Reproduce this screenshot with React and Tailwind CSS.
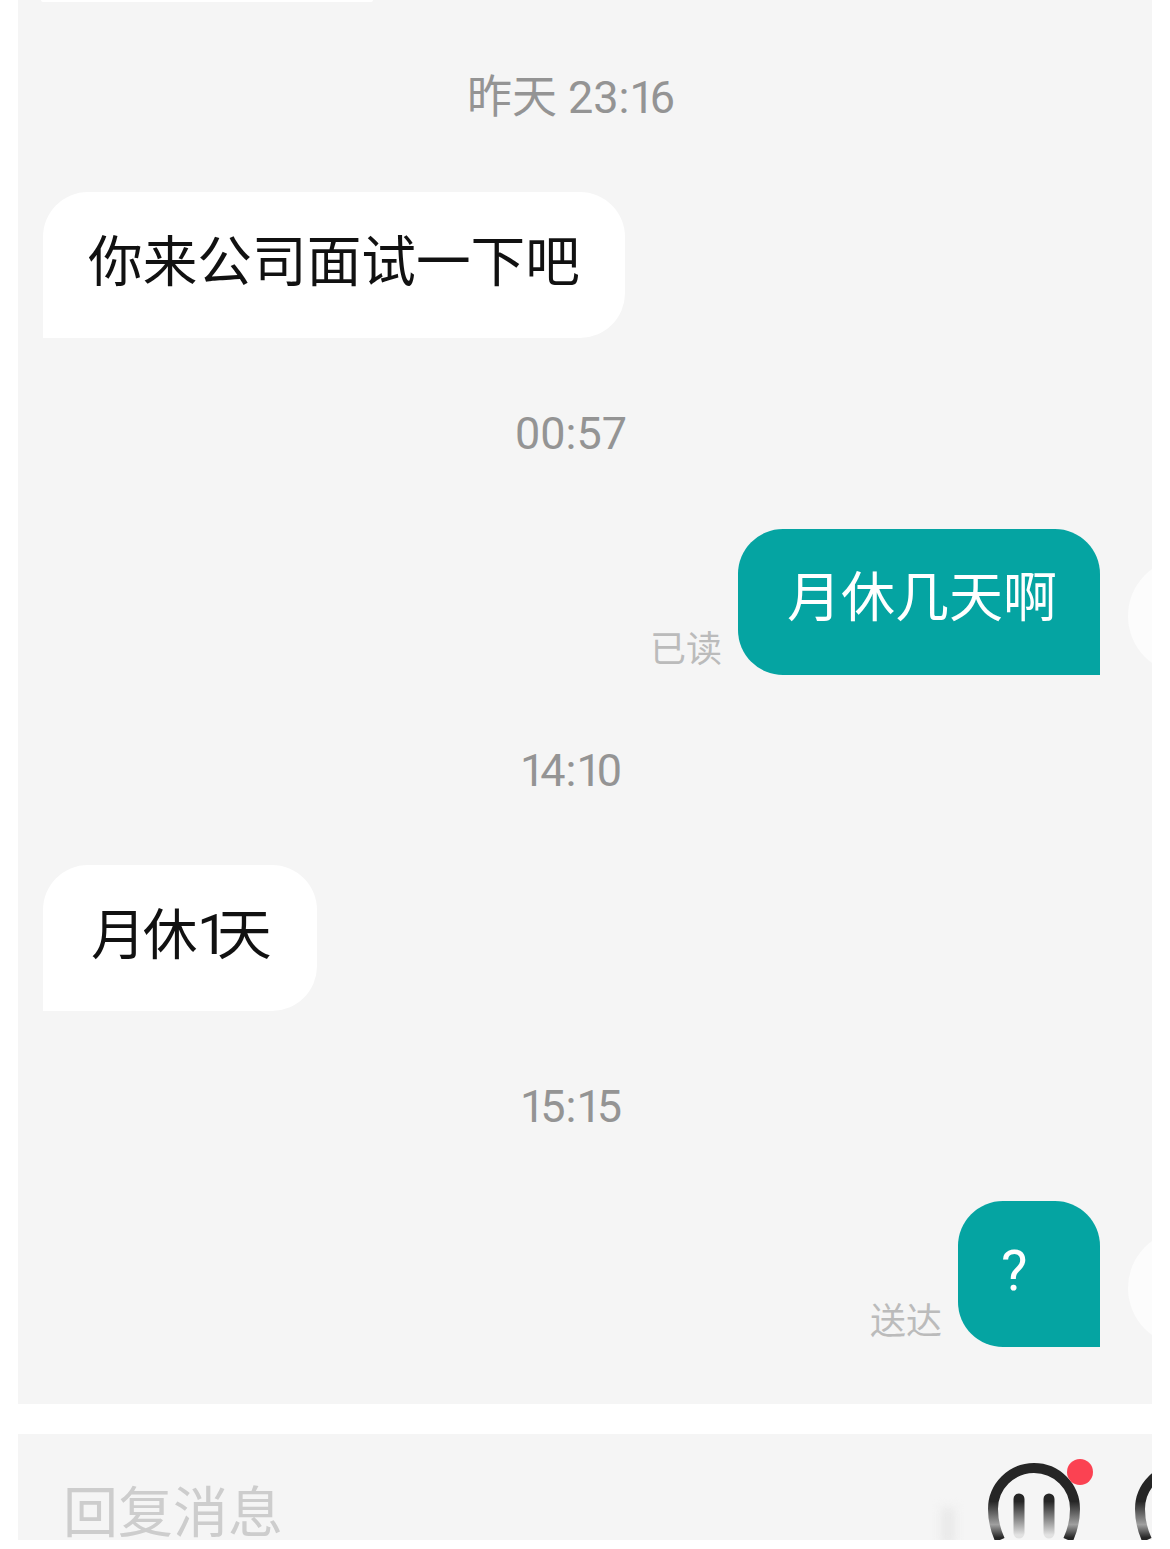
const fontStack = { fontFamily: 'Roboto, "Noto Sans CJK SC", sans-serif' };

function One() {
  return <span className="tracking-[-5px]">1</span>;
}

function Time({ children }) {
  return (
    <div className="h-[60px] pr-[28px] pt-[1px] flex items-center justify-center text-[45px] leading-[60px] text-[#949494]">
      <span>{children}</span>
    </div>
  );
}

function LeftBubble({ className, children }) {
  return (
    <div className="flex pl-[25px]">
      <div className={`h-[146px] pb-[6px] flex items-center pr-[45px] bg-white rounded-[45px] rounded-bl-none text-[54.67px] leading-none text-[#111111] ${className}`}>
        <span>{children}</span>
      </div>
    </div>
  );
}

function RightBubble({ status, className, children }) {
  return (
    <div className="flex justify-end items-end mr-[-92px]">
      <span className="mr-[16px] mb-[3px] text-[36px] leading-[44px] text-[#bbbbbb]">{status}</span>
      <div className={`h-[146px] min-w-[142px] pb-[6px] flex items-center bg-[#05a4a2] rounded-[45px] rounded-br-none text-[54px] leading-none text-white ${className}`}>
        {children}
      </div>
      {/* 头像，右边被裁掉 */}
      <div className="ml-[28px] mb-[1px] w-[116px] h-[116px] rounded-full bg-[#fcfcfc] shrink-0" />
    </div>
  );
}

function HeadIcon({ id, dot }) {
  return (
    <svg width="92" height="77" viewBox="0 0 92 77" fill="none" className="overflow-visible shrink-0">
      <defs>
        <linearGradient id={`${id}-head`} gradientUnits="userSpaceOnUse" x1="0" y1="0" x2="0" y2="77">
          <stop offset="0.5" stopColor="#262626" />
          <stop offset="0.8" stopColor="#a0a0a0" />
          <stop offset="0.97" stopColor="#262626" />
        </linearGradient>
        <linearGradient id={`${id}-eye`} gradientUnits="userSpaceOnUse" x1="0" y1="30" x2="0" y2="72">
          <stop offset="0.2" stopColor="#262626" />
          <stop offset="1" stopColor="#e2e2e2" />
        </linearGradient>
      </defs>
      <path d="M12 77 Q5 62 5 46 A41 41 0 0 1 87 46 Q87 62 80 77" stroke={`url(#${id}-head)`} strokeWidth="10" />
      <path d="M31 36 V70 M61 36 V70" stroke={`url(#${id}-eye)`} strokeWidth="11" strokeLinecap="round" />
      {dot && <circle cx="92" cy="9" r="13" fill="#fb4252" />}
    </svg>
  );
}

export default function App() {
  return (
    <div className="h-[1549px] bg-white px-[18px] overflow-hidden" style={fontStack}>
      <div className="h-[1404px] bg-[#f5f5f5] overflow-hidden">
        {/* 上一条消息的底边 */}
        <div className="ml-[23px] w-[332px] h-[2px] bg-white rounded-b-full" />
        <div className="pt-[65px] flex flex-col gap-[65px]">
          <Time>昨天 23:<One />6</Time>
          <LeftBubble className="pl-[45px]">你来公司面试一下吧</LeftBubble>
          <Time>00:57</Time>
          <div className="mt-px">
            <RightBubble status="已读" className="pl-[49px] pr-[43px]">月休几天啊</RightBubble>
          </div>
          <Time><One />4:<One />0</Time>
          <LeftBubble className="pl-[48px]">
            <span className="tracking-[-3px]">月</span>休<span className="tracking-[-11px]">1</span>天
          </LeftBubble>
          <Time><One />5:<One />5</Time>
          <RightBubble status="送达" className="pl-[43px]"><span className="text-[56px]">?</span></RightBubble>
        </div>
      </div>
      <div className="mt-[30px] h-[106px] bg-[#f5f5f5] flex justify-between">
        <div className="pl-[45px] pt-[54px] text-[55px] leading-[50px] text-[#cdcdcd]">回复消息</div>
        <div className="relative w-[220px] h-full overflow-hidden flex gap-[55px] pl-[56px] pt-[29px]">
          {/* 水印糊掉的一点痕迹 */}
          <div className="absolute left-[9px] top-[74px] w-[14px] h-[36px] bg-[#e9e9e9] blur-[5px]" />
          <HeadIcon id="a" dot />
          <HeadIcon id="b" />
        </div>
      </div>
    </div>
  );
}
